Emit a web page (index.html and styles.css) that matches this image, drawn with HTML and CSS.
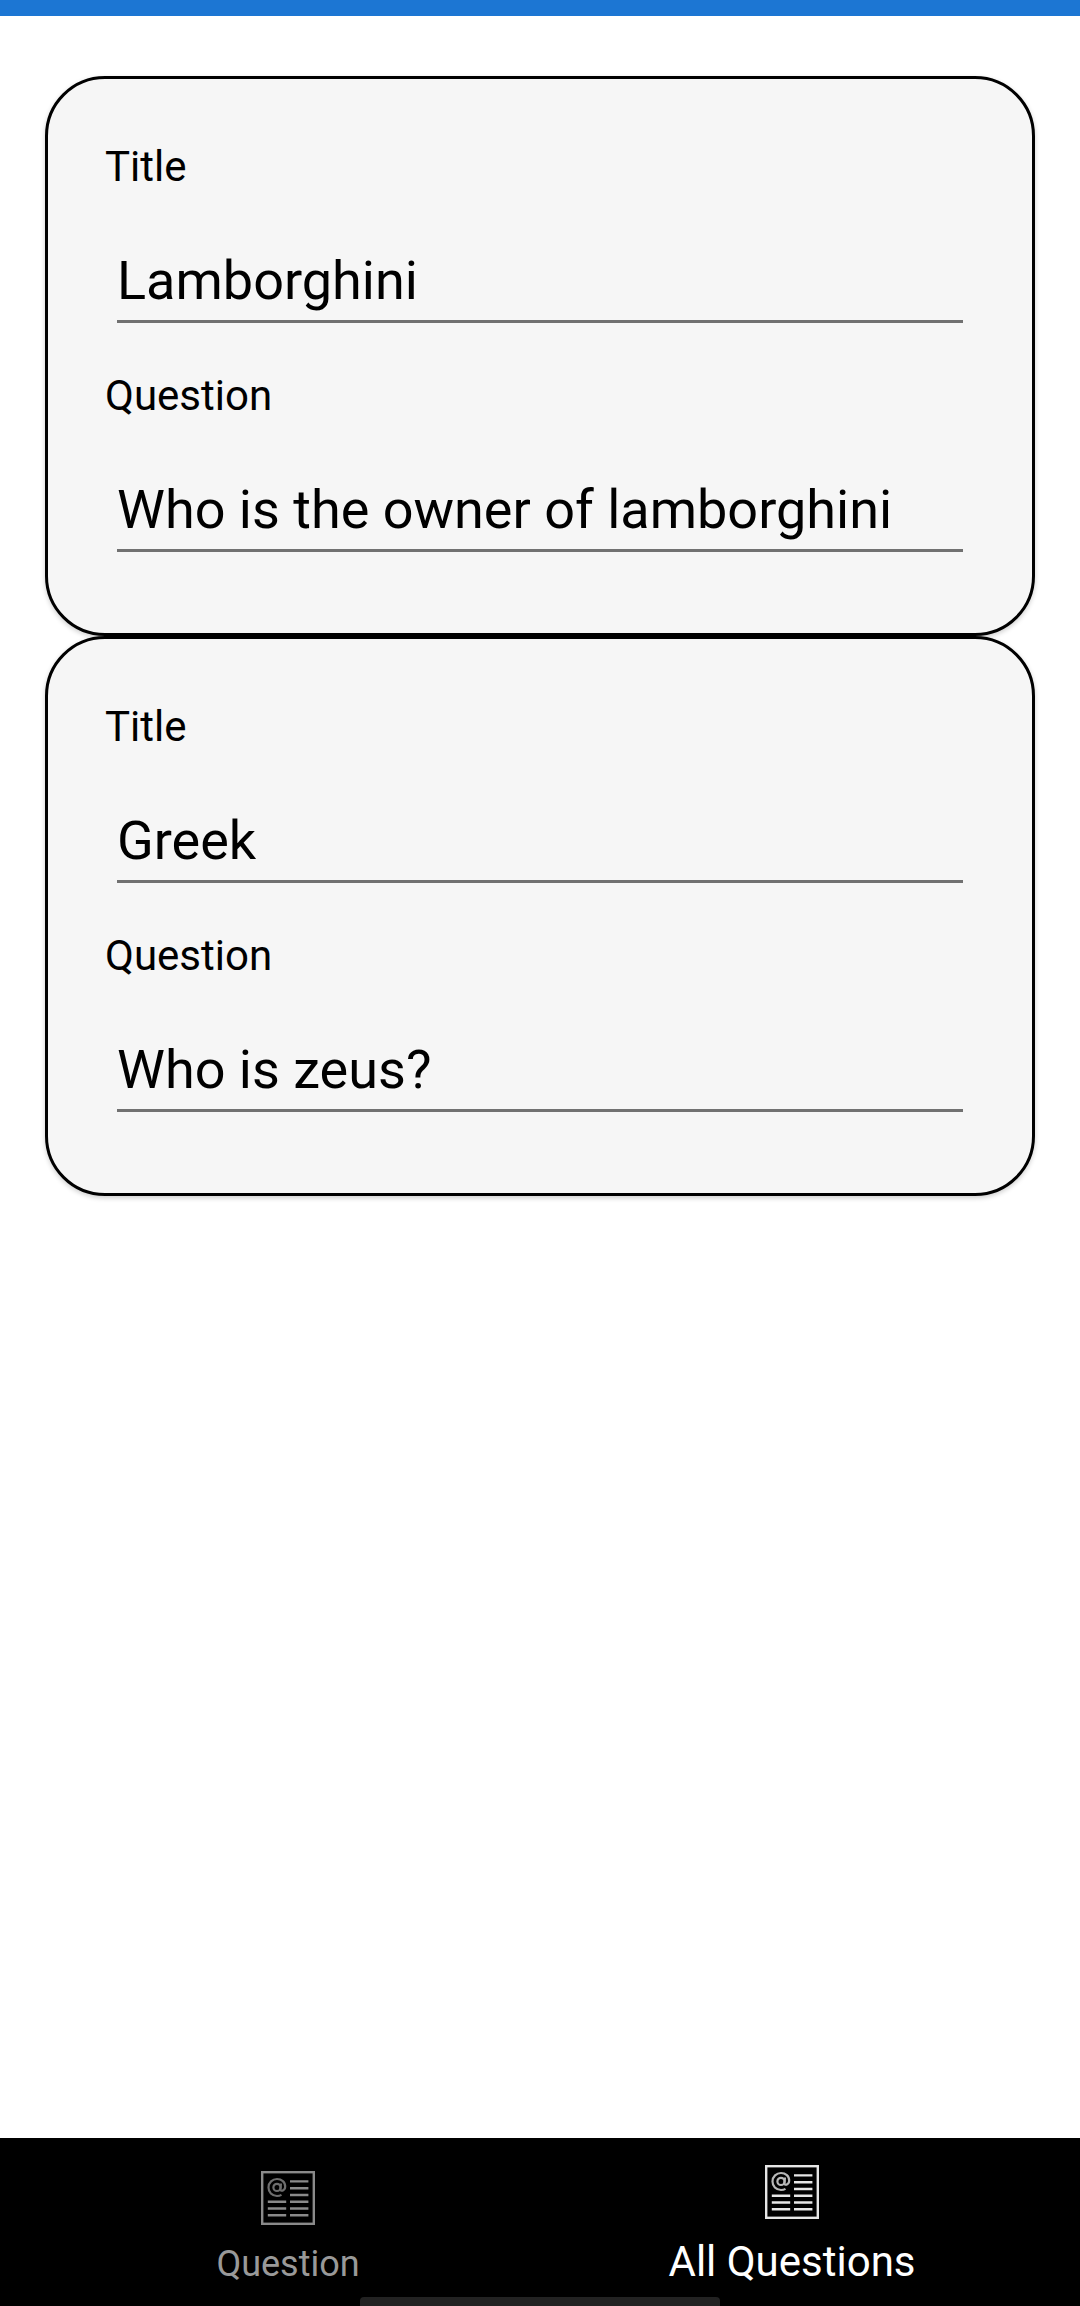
FILE: index.html
```html
<!DOCTYPE html>
<html lang="en">
<head>
<meta charset="utf-8">
<meta name="viewport" content="width=device-width, initial-scale=1">
<title>All Questions</title>
<link rel="stylesheet" href="styles.css">
</head>
<body>
<header class="app-bar"></header>
<main class="content">
  <form class="card">
    <label class="label" for="title-1">Title</label>
    <input class="entry" id="title-1" type="text" value="Lamborghini">
    <label class="label" for="question-1">Question</label>
    <input class="entry" id="question-1" type="text" value="Who is the owner of lamborghini">
  </form>
  <form class="card">
    <label class="label" for="title-2">Title</label>
    <input class="entry" id="title-2" type="text" value="Greek">
    <label class="label" for="question-2">Question</label>
    <input class="entry" id="question-2" type="text" value="Who is zeus?">
  </form>
</main>
<nav class="tabs">
  <a class="tab" href="#question">
    <svg class="tab-icon" viewBox="0 0 54 54" aria-hidden="true"><use href="#feed"/></svg>
    <span>Question</span>
  </a>
  <a class="tab tab-active" href="#all" aria-current="page">
    <svg class="tab-icon" viewBox="0 0 54 54" aria-hidden="true">
      <g id="feed" fill="none" stroke="currentColor" stroke-width="2.4">
        <rect x="1.2" y="1.2" width="51.6" height="51.6"/>
        <path d="M29 10.4h18.4M29 17.2h18.4M29 24h18.4M6.8 30.8h18.4M29 30.8h18.4M6.8 37.5h18.4M29 37.5h18.4M6.8 44.3h18.4M29 44.3h18.4"/>
        <g stroke-width="2.2" opacity="0.8">
          <circle cx="16" cy="16.4" r="3.6"/>
          <path d="M20 12.5l-.6 5.5c-.2 3 4.6 2 4.8-2.200C24.400 11 20.500 8 16 8s-8.500 3.600-8.500 8.500S11 25 16 25c1.800 0 3.200-.4 4.500-1.100"/>
        </g>
      </g>
    </svg>
    <span>All Questions</span>
  </a>
  <div class="home-handle"></div>
</nav>
</body>
</html>
```
FILE: styles.css
```css
* { box-sizing: border-box; }
body {
  margin: 0;
  min-height: 100vh;
  display: flex;
  flex-direction: column;
  background: #fff;
  color: #000;
  font-family: Roboto, "Liberation Sans", sans-serif;
}
.app-bar { height: 16px; background: #1c76d3; }
.content { flex: 1; padding: 60px 45px; }
.card {
  display: flex;
  flex-direction: column;
  padding: 60px 57px 36px;
  border: 3px solid #000;
  border-radius: 60px;
  background: #f6f6f6;
  box-shadow: 0 2px 5px rgba(0, 0, 0, 0.2);
}
.label { font-size: 42px; line-height: 56px; }
.entry {
  height: 84px;
  margin: 44px 12px 45px;
  padding: 2px 0 0;
  border: 0;
  border-bottom: 3px solid #717171;
  border-radius: 0;
  background: transparent;
  color: #000;
  font: 54px/80px Roboto, "Liberation Sans", sans-serif;
  outline: 0;
}
.tabs {
  position: relative;
  display: flex;
  justify-content: center;
  height: 168px;
  background: #000;
}
.tab {
  flex: 1;
  max-width: 504px;
  display: flex;
  flex-direction: column;
  align-items: center;
  gap: 15px;
  padding-top: 33px;
  color: #999;
  font-size: 36px;
  line-height: 48px;
  text-decoration: none;
}
.tab-active {
  padding-top: 27px;
  color: #fff;
  font-size: 42px;
  line-height: 56px;
}
.tab-icon { width: 54px; height: 54px; opacity: 0.9; }
.home-handle {
  position: absolute;
  left: 50%;
  bottom: 0;
  width: 360px;
  height: 9px;
  transform: translateX(-50%);
  border-radius: 4px 4px 0 0;
  background: #222;
}
```
